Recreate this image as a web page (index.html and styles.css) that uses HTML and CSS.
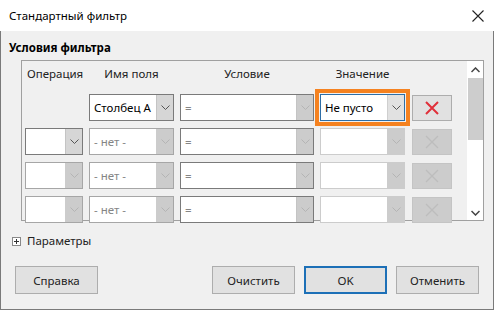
FILE: index.html
```html
<!DOCTYPE html>
<html lang="ru">
<head>
<meta charset="UTF-8">
<title>Стандартный фильтр</title>
<link rel="stylesheet" href="styles.css">
</head>
<body>

<div class="window">
  <div class="titlebar">
    <span class="title">Стандартный фильтр</span>
    <svg class="close" width="12" height="12" viewBox="0 0 12 12"><path d="M0.5 0.5 L11.5 11.5 M11.5 0.5 L0.5 11.5" stroke="#222" stroke-width="1.1" fill="none"/></svg>
  </div>

  <div class="main">
    <div class="section-title">Условия фильтра</div>

    <div class="frame">
      <div class="grid">
        <div class="head">Операция</div>
        <div class="head center">Имя поля</div>
        <div class="head center">Условие</div>
        <div class="head center">Значение</div>
        <div></div>

        <!-- row 1 -->
        <div></div>
        <div class="combo"><span class="val">Столбец А</span><span class="drop"><svg width="9" height="5" viewBox="0 0 9 5"><path d="M0.5 0.5 L4.5 4.5 L8.5 0.5" stroke="#555" fill="none"/></svg></span></div>
        <div class="combo dim-btn"><span class="val gray">=</span><span class="drop"><svg width="9" height="5" viewBox="0 0 9 5"><path d="M0.5 0.5 L4.5 4.5 L8.5 0.5" stroke="#b4b4b4" fill="none"/></svg></span></div>
        <div class="combo focus"><span class="val">Не пусто</span><span class="drop"><svg width="9" height="5" viewBox="0 0 9 5"><path d="M0.5 0.5 L4.5 4.5 L8.5 0.5" stroke="#555" fill="none"/></svg></span></div>
        <div class="del"><svg width="14" height="14" viewBox="0 0 14 14"><path d="M1 1 L13 13 M13 1 L1 13" stroke="#e0303a" stroke-width="2" fill="none"/></svg></div>

        <!-- row 2 -->
        <div class="combo"><span class="val"></span><span class="drop"><svg width="9" height="5" viewBox="0 0 9 5"><path d="M0.5 0.5 L4.5 4.5 L8.5 0.5" stroke="#555" fill="none"/></svg></span></div>
        <div class="combo off"><span class="val gray">- нет -</span><span class="drop"><svg width="9" height="5" viewBox="0 0 9 5"><path d="M0.5 0.5 L4.5 4.5 L8.5 0.5" stroke="#b4b4b4" fill="none"/></svg></span></div>
        <div class="combo dim-btn"><span class="val gray">=</span><span class="drop"><svg width="9" height="5" viewBox="0 0 9 5"><path d="M0.5 0.5 L4.5 4.5 L8.5 0.5" stroke="#b4b4b4" fill="none"/></svg></span></div>
        <div class="combo off light"><span class="val"></span><span class="drop"><svg width="9" height="5" viewBox="0 0 9 5"><path d="M0.5 0.5 L4.5 4.5 L8.5 0.5" stroke="#b4b4b4" fill="none"/></svg></span></div>
        <div class="del off"><svg width="14" height="14" viewBox="0 0 14 14"><path d="M1 1 L13 13 M13 1 L1 13" stroke="#bdbdbd" stroke-width="1.3" fill="none"/></svg></div>

        <!-- row 3 -->
        <div class="combo off"><span class="val"></span><span class="drop"><svg width="9" height="5" viewBox="0 0 9 5"><path d="M0.5 0.5 L4.5 4.5 L8.5 0.5" stroke="#b4b4b4" fill="none"/></svg></span></div>
        <div class="combo off"><span class="val gray">- нет -</span><span class="drop"><svg width="9" height="5" viewBox="0 0 9 5"><path d="M0.5 0.5 L4.5 4.5 L8.5 0.5" stroke="#b4b4b4" fill="none"/></svg></span></div>
        <div class="combo dim-btn"><span class="val gray">=</span><span class="drop"><svg width="9" height="5" viewBox="0 0 9 5"><path d="M0.5 0.5 L4.5 4.5 L8.5 0.5" stroke="#b4b4b4" fill="none"/></svg></span></div>
        <div class="combo off light"><span class="val"></span><span class="drop"><svg width="9" height="5" viewBox="0 0 9 5"><path d="M0.5 0.5 L4.5 4.5 L8.5 0.5" stroke="#b4b4b4" fill="none"/></svg></span></div>
        <div class="del off"><svg width="14" height="14" viewBox="0 0 14 14"><path d="M1 1 L13 13 M13 1 L1 13" stroke="#bdbdbd" stroke-width="1.3" fill="none"/></svg></div>

        <!-- row 4 -->
        <div class="combo off"><span class="val"></span><span class="drop"><svg width="9" height="5" viewBox="0 0 9 5"><path d="M0.5 0.5 L4.5 4.5 L8.5 0.5" stroke="#b4b4b4" fill="none"/></svg></span></div>
        <div class="combo off"><span class="val gray">- нет -</span><span class="drop"><svg width="9" height="5" viewBox="0 0 9 5"><path d="M0.5 0.5 L4.5 4.5 L8.5 0.5" stroke="#b4b4b4" fill="none"/></svg></span></div>
        <div class="combo dim-btn"><span class="val gray">=</span><span class="drop"><svg width="9" height="5" viewBox="0 0 9 5"><path d="M0.5 0.5 L4.5 4.5 L8.5 0.5" stroke="#b4b4b4" fill="none"/></svg></span></div>
        <div class="combo off light"><span class="val"></span><span class="drop"><svg width="9" height="5" viewBox="0 0 9 5"><path d="M0.5 0.5 L4.5 4.5 L8.5 0.5" stroke="#b4b4b4" fill="none"/></svg></span></div>
        <div class="del off"><svg width="14" height="14" viewBox="0 0 14 14"><path d="M1 1 L13 13 M13 1 L1 13" stroke="#bdbdbd" stroke-width="1.3" fill="none"/></svg></div>
      </div>

      <div class="scrollbar">
        <svg class="arrow" width="9" height="6" viewBox="0 0 9 6"><path d="M0.5 5 L4.5 1 L8.5 5" stroke="#444" stroke-width="1.5" fill="none"/></svg>
        <div class="thumb"></div>
        <div class="track"></div>
        <svg class="arrow" width="9" height="6" viewBox="0 0 9 6"><path d="M0.5 1 L4.5 5 L8.5 1" stroke="#444" stroke-width="1.5" fill="none"/></svg>
      </div>
    </div>

    <div class="params">
      <svg width="9" height="9" viewBox="0 0 9 9"><rect x="0.5" y="0.5" width="8" height="8" fill="#fff" stroke="#888"/><path d="M2 4.5 H7 M4.5 2 V7" stroke="#333"/></svg>
      <span>Параметры</span>
    </div>

    <div class="buttons">
      <button class="btn">Справка</button>
      <div class="spacer"></div>
      <button class="btn">Очистить</button>
      <button class="btn default">OK</button>
      <button class="btn">Отменить</button>
    </div>
  </div>
</div>

</body>
</html>
```

FILE: styles.css
```css
* { margin: 0; padding: 0; box-sizing: border-box; }

body {
  font-family: "Noto Sans", "Open Sans", sans-serif;
  font-size: 11.5px;
  color: #000;
  background: #fff;
}

.window {
  width: 494px;
  height: 310px;
  display: flex;
  flex-direction: column;
}

.titlebar {
  height: 31px;
  display: flex;
  align-items: center;
  justify-content: space-between;
  padding: 0 10px 0 9px;
  background: #fff;
  flex-shrink: 0;
}
.title { font-size: 11.5px; }
.close { margin-top: 1px; }

.main {
  flex: 1;
  background: #f0f0f0;
  border: 1px solid #7a7a7a;
  border-top: none;
  padding: 0 14px 0 8px;
  display: flex;
  flex-direction: column;
}

.section-title {
  font-weight: bold;
  line-height: 16px;
  margin-top: 9px;
}

.frame {
  margin: 4px 0 0 12px;
  width: 463px;
  height: 161px;
  border: 1px solid #a0a0a0;
  display: flex;
}

.grid {
  flex: 1;
  display: grid;
  grid-template-columns: 58px 85px 134px 85px 41px;
  grid-template-rows: 26px repeat(4, 27px);
  column-gap: 6px;
  row-gap: 7px;
  padding-left: 3px;
  align-content: start;
}

.head {
  align-self: center;
  line-height: 16px;
  padding: 0 0 1px 2px;
  color: #222;
}
.head.center { text-align: center; padding-left: 0; }

.combo {
  display: flex;
  background: #fff;
  border: 1px solid #7a7a7a;
}
.combo .val {
  flex: 1;
  display: flex;
  align-items: center;
  padding-left: 4px;
  white-space: nowrap;
  overflow: hidden;
}
.combo .gray { color: #858585; }
.combo .drop {
  width: 17px;
  background: #d6d6d6;
  display: flex;
  align-items: center;
  justify-content: center;
  border-left: 1px solid #c4c4c4;
}
.combo.dim-btn .drop { background: #cccccc; }
.combo.off { border-color: #a6a6a6; }
.combo.off .drop { background: #cccccc; border-left-color: #cccccc; }
.combo.light { border-color: #cccccc; }

.combo.focus {
  border-color: #2e6ea6;
  outline: 4px solid #f58220;
  outline-offset: 1px;
}
.combo.focus .drop { background: #e1e1e1; border-left-color: #cfcfcf; }

.del {
  align-self: center;
  height: 26px;
  margin-left: 1px;
  background: #e1e1e1;
  border: 1px solid #adadad;
  display: flex;
  align-items: center;
  justify-content: center;
}
.del.off { background: #cccccc; border-color: #c4c4c4; }

.scrollbar {
  width: 16px;
  background: #fff;
  display: flex;
  flex-direction: column;
  align-items: center;
  padding: 6px 0 4px;
}
.scrollbar .arrow { flex-shrink: 0; margin-left: 1px; }
.thumb {
  width: 15px;
  height: 62px;
  margin-top: 5px;
  background: #cdcdcd;
  flex-shrink: 0;
}
.track { flex: 1; }

.params {
  display: flex;
  align-items: center;
  gap: 6px;
  line-height: 16px;
  margin: 12px 0 0 3px;
  color: #222;
}

.buttons {
  display: flex;
  gap: 9px;
  margin: 17px 0 0 6px;
}
.spacer { flex: 1; }

.btn {
  width: 83px;
  height: 28px;
  font-family: inherit;
  font-size: 11.5px;
  color: #222;
  background: #e1e1e1;
  border: 1px solid #adadad;
}
.btn.default { border: 2px solid #1d70b7; }
```
